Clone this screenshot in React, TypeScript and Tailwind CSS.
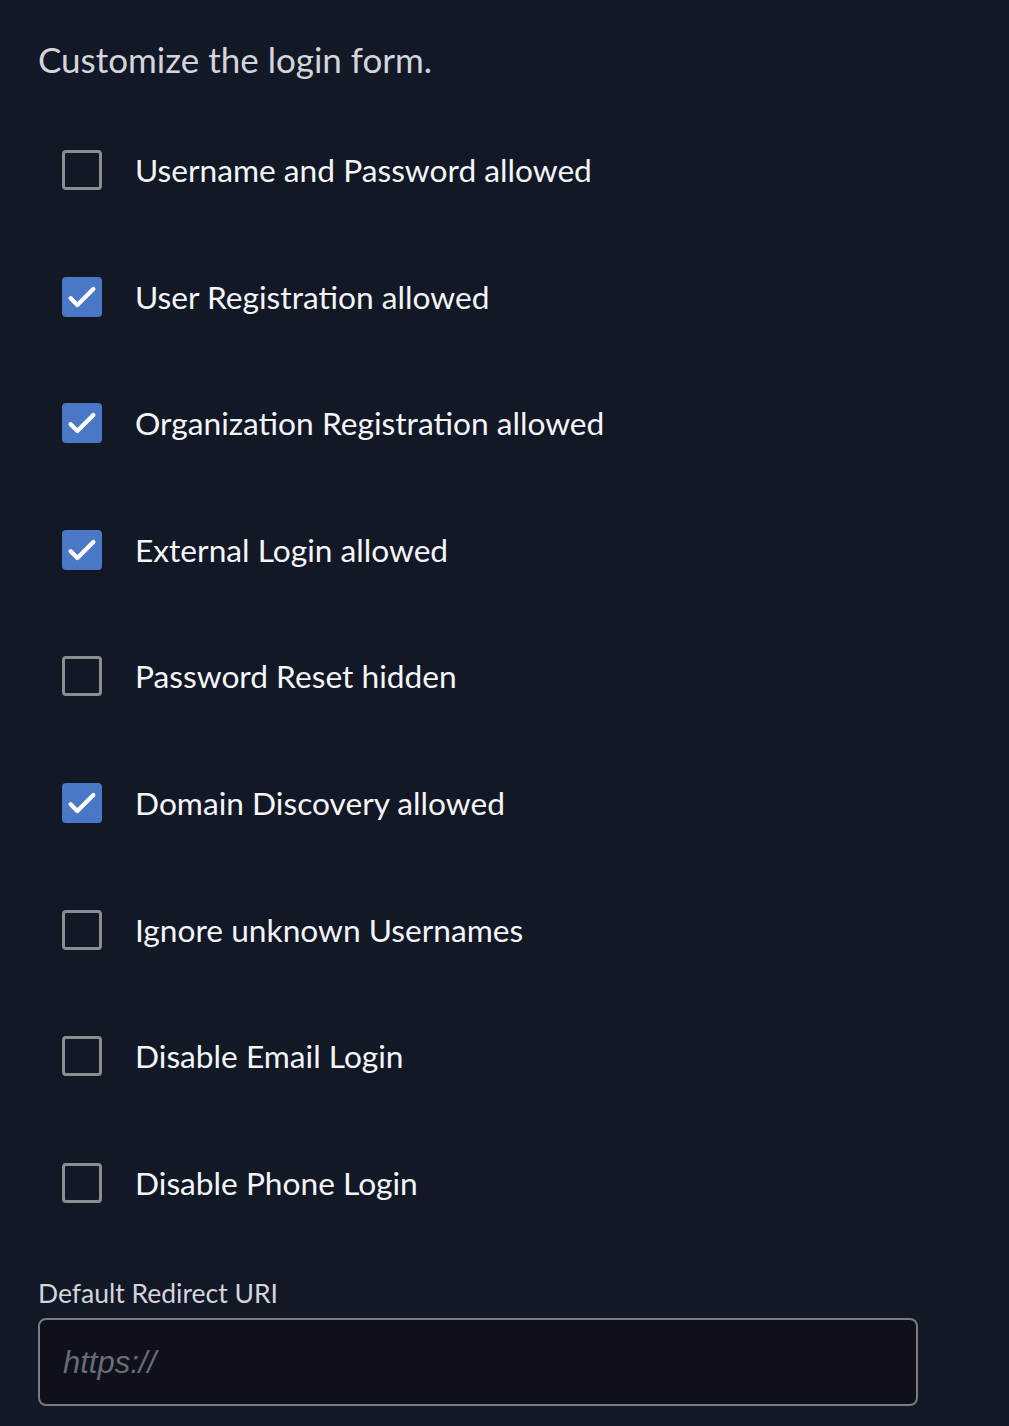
const OPTIONS = [
  { label: 'Username and Password allowed', checked: false },
  { label: 'User Registration allowed', checked: true },
  { label: 'Organization Registration allowed', checked: true },
  { label: 'External Login allowed', checked: true },
  { label: 'Password Reset hidden', checked: false },
  { label: 'Domain Discovery allowed', checked: true },
  { label: 'Ignore unknown Usernames', checked: false },
  { label: 'Disable Email Login', checked: false },
  { label: 'Disable Phone Login', checked: false },
]

function Checkbox({ checked }: { checked: boolean }) {
  if (checked) {
    return (
      <div className="w-[40px] h-[40px] shrink-0 rounded-[4px] bg-[#4a77c6] flex items-center justify-center">
        <svg width="32" height="32" viewBox="0 0 24 24" fill="none" stroke="#ffffff" strokeWidth="3.2" strokeLinecap="round" strokeLinejoin="round">
          <path d="M3.5 13l5 5L20.5 6" />
        </svg>
      </div>
    )
  }
  return <div className="w-[40px] h-[40px] shrink-0 rounded-[4px] border-[3px] border-[#8b8d93]" />
}

export default function App() {
  return (
    <div className="min-h-[1426px] w-full bg-[#131827] pl-[38px] pt-[39px] font-['Lato','Noto_Sans',sans-serif]">
      <p className="text-[35px] leading-[40px] text-[#d3d5da]">Customize the login form.</p>

      <div className="mt-[71px] pl-[24px] flex flex-col gap-[86.6px]">
        {OPTIONS.map(o => (
          <label key={o.label} className="flex items-center gap-[33px] h-[40px]">
            <Checkbox checked={o.checked} />
            <span className="text-[31.7px] leading-[40px] text-[#f4f5f7]">{o.label}</span>
          </label>
        ))}
      </div>

      <p className="mt-[74px] text-[26.5px] leading-[32px] text-[#d3d5da]">Default Redirect URI</p>
      <div className="mt-[9px] w-[880px] h-[88px] rounded-[8px] border-2 border-[#7a7b80] bg-[#0e111b] flex items-center pl-[23px] pt-[3px]">
        <span className="font-['Liberation_Sans',Arial,sans-serif] italic text-[31px] text-[#6a6c73]">https://</span>
      </div>
    </div>
  )
}
